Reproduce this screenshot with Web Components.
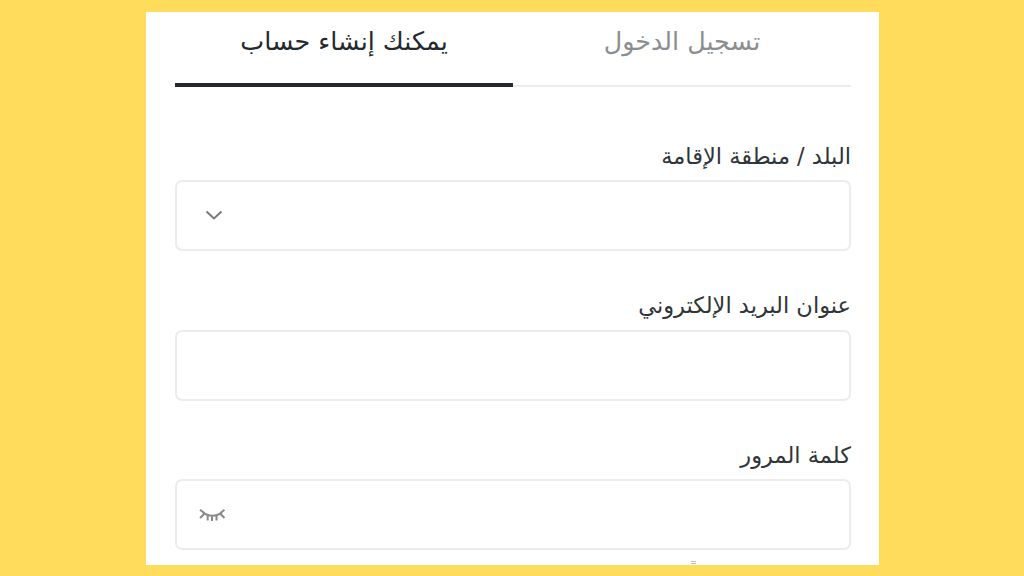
<!DOCTYPE html>
<html lang="ar" dir="rtl">
<head>
<meta charset="utf-8">
<title>إنشاء حساب</title>
<style>
  html, body { margin: 0; height: 576px; overflow: hidden; }
  body {
    background: #ffdc5b;
    font-family: "DejaVu Sans", "Noto Sans", sans-serif;
    padding: 12px 145px 11px 146px;
    box-sizing: border-box;
  }
</style>
</head>
<body>
<signup-card>
  <auth-tabs slot="tabs"></auth-tabs>
  <form-field label="البلد / منطقة الإقامة" icon="chevron"></form-field>
  <form-field label="عنوان البريد الإلكتروني"></form-field>
  <form-field label="كلمة المرور" icon="eye"></form-field>
  <clipped-note></clipped-note>
</signup-card>

<script>
class SignupCard extends HTMLElement {
  constructor() {
    super();
    this.attachShadow({ mode: 'open' });
    this.shadowRoot.innerHTML = `
      <style>
        :host {
          display: block;
          height: 553px;
          background: #fff;
          overflow: hidden;
          padding: 0 28px 0 29px;
          box-sizing: border-box;
        }
        .fields {
          display: flex;
          flex-direction: column;
          gap: 41px;
          padding-top: 55.5px;
        }
      </style>
      <slot name="tabs"></slot>
      <div class="fields"><slot></slot></div>
    `;
  }
}

class AuthTabs extends HTMLElement {
  constructor() {
    super();
    this.attachShadow({ mode: 'open' });
    this.shadowRoot.innerHTML = `
      <style>
        :host { display: flex; height: 75px; }
        .tab {
          flex: 1;
          display: flex;
          justify-content: center;
          align-items: center;
          padding-bottom: 15px;
          box-sizing: border-box;
          font-size: 25.4px;
          color: #8b8e90;
          border-bottom: 2px solid #ececec;
          height: 75px;
        }
        .tab.active {
          color: #23292e;
          border-bottom: 4px solid #23292e;
          padding-bottom: 13px;
        }
      </style>
      <div class="tab">تسجيل الدخول</div>
      <div class="tab active">يمكنك إنشاء حساب</div>
    `;
  }
}

class FormField extends HTMLElement {
  constructor() {
    super();
    this.attachShadow({ mode: 'open' });
    const icons = {
      chevron: `<svg style="margin:0 0 2px 12px" width="20" height="20" viewBox="0 0 20 20" fill="none" stroke="#77797b" stroke-width="2"><path d="M2.5 6.5 10 13.5 17.5 6.5"/></svg>`,
      eye: `<svg style="margin:3px 0 0 7px" width="26" height="16" viewBox="0 0 26 16" fill="none" stroke="#86888a" stroke-width="2"><path d="M3.7 4.3C9 8.8 18 8.8 23 4.3"/><path d="M5.3 5 1 1.7M21.5 5 25.5 1.7M5.3 6 1 10M21.5 6 25.5 10M8.7 8v4.5M13 8.5v4.5M17.5 8v4.5"/></svg>`
    };
    const icon = icons[this.getAttribute('icon')] || '';
    this.shadowRoot.innerHTML = `
      <style>
        :host { display: block; }
        label {
          display: block;
          font-size: 22.5px;
          line-height: 26px;
          height: 37.5px;
          color: #2f3539;
          white-space: nowrap;
        }
        .box {
          height: 71px;
          box-sizing: border-box;
          border: 2px solid #ececec;
          border-radius: 7px;
          display: flex;
          align-items: center;
          justify-content: flex-end;
          padding-left: 15px;
        }
        svg { display: block; }
      </style>
      <label>${this.getAttribute('label')}</label>
      <div class="box">${icon}</div>
    `;
  }
}

// top edge of the next line, cut off by the bottom of the card
class ClippedNote extends HTMLElement {
  constructor() {
    super();
    this.attachShadow({ mode: 'open' });
    this.shadowRoot.innerHTML = `
      <style>
        :host {
          display: block;
          width: 5px;
          height: 3px;
          margin: -30px 155px 0 0;
          box-sizing: border-box;
          border-top: 1px solid #bdbdbd;
          border-bottom: 1px solid #bdbdbd;
        }
      </style>
    `;
  }
}

customElements.define('signup-card', SignupCard);
customElements.define('auth-tabs', AuthTabs);
customElements.define('form-field', FormField);
customElements.define('clipped-note', ClippedNote);
</script>
</body>
</html>
